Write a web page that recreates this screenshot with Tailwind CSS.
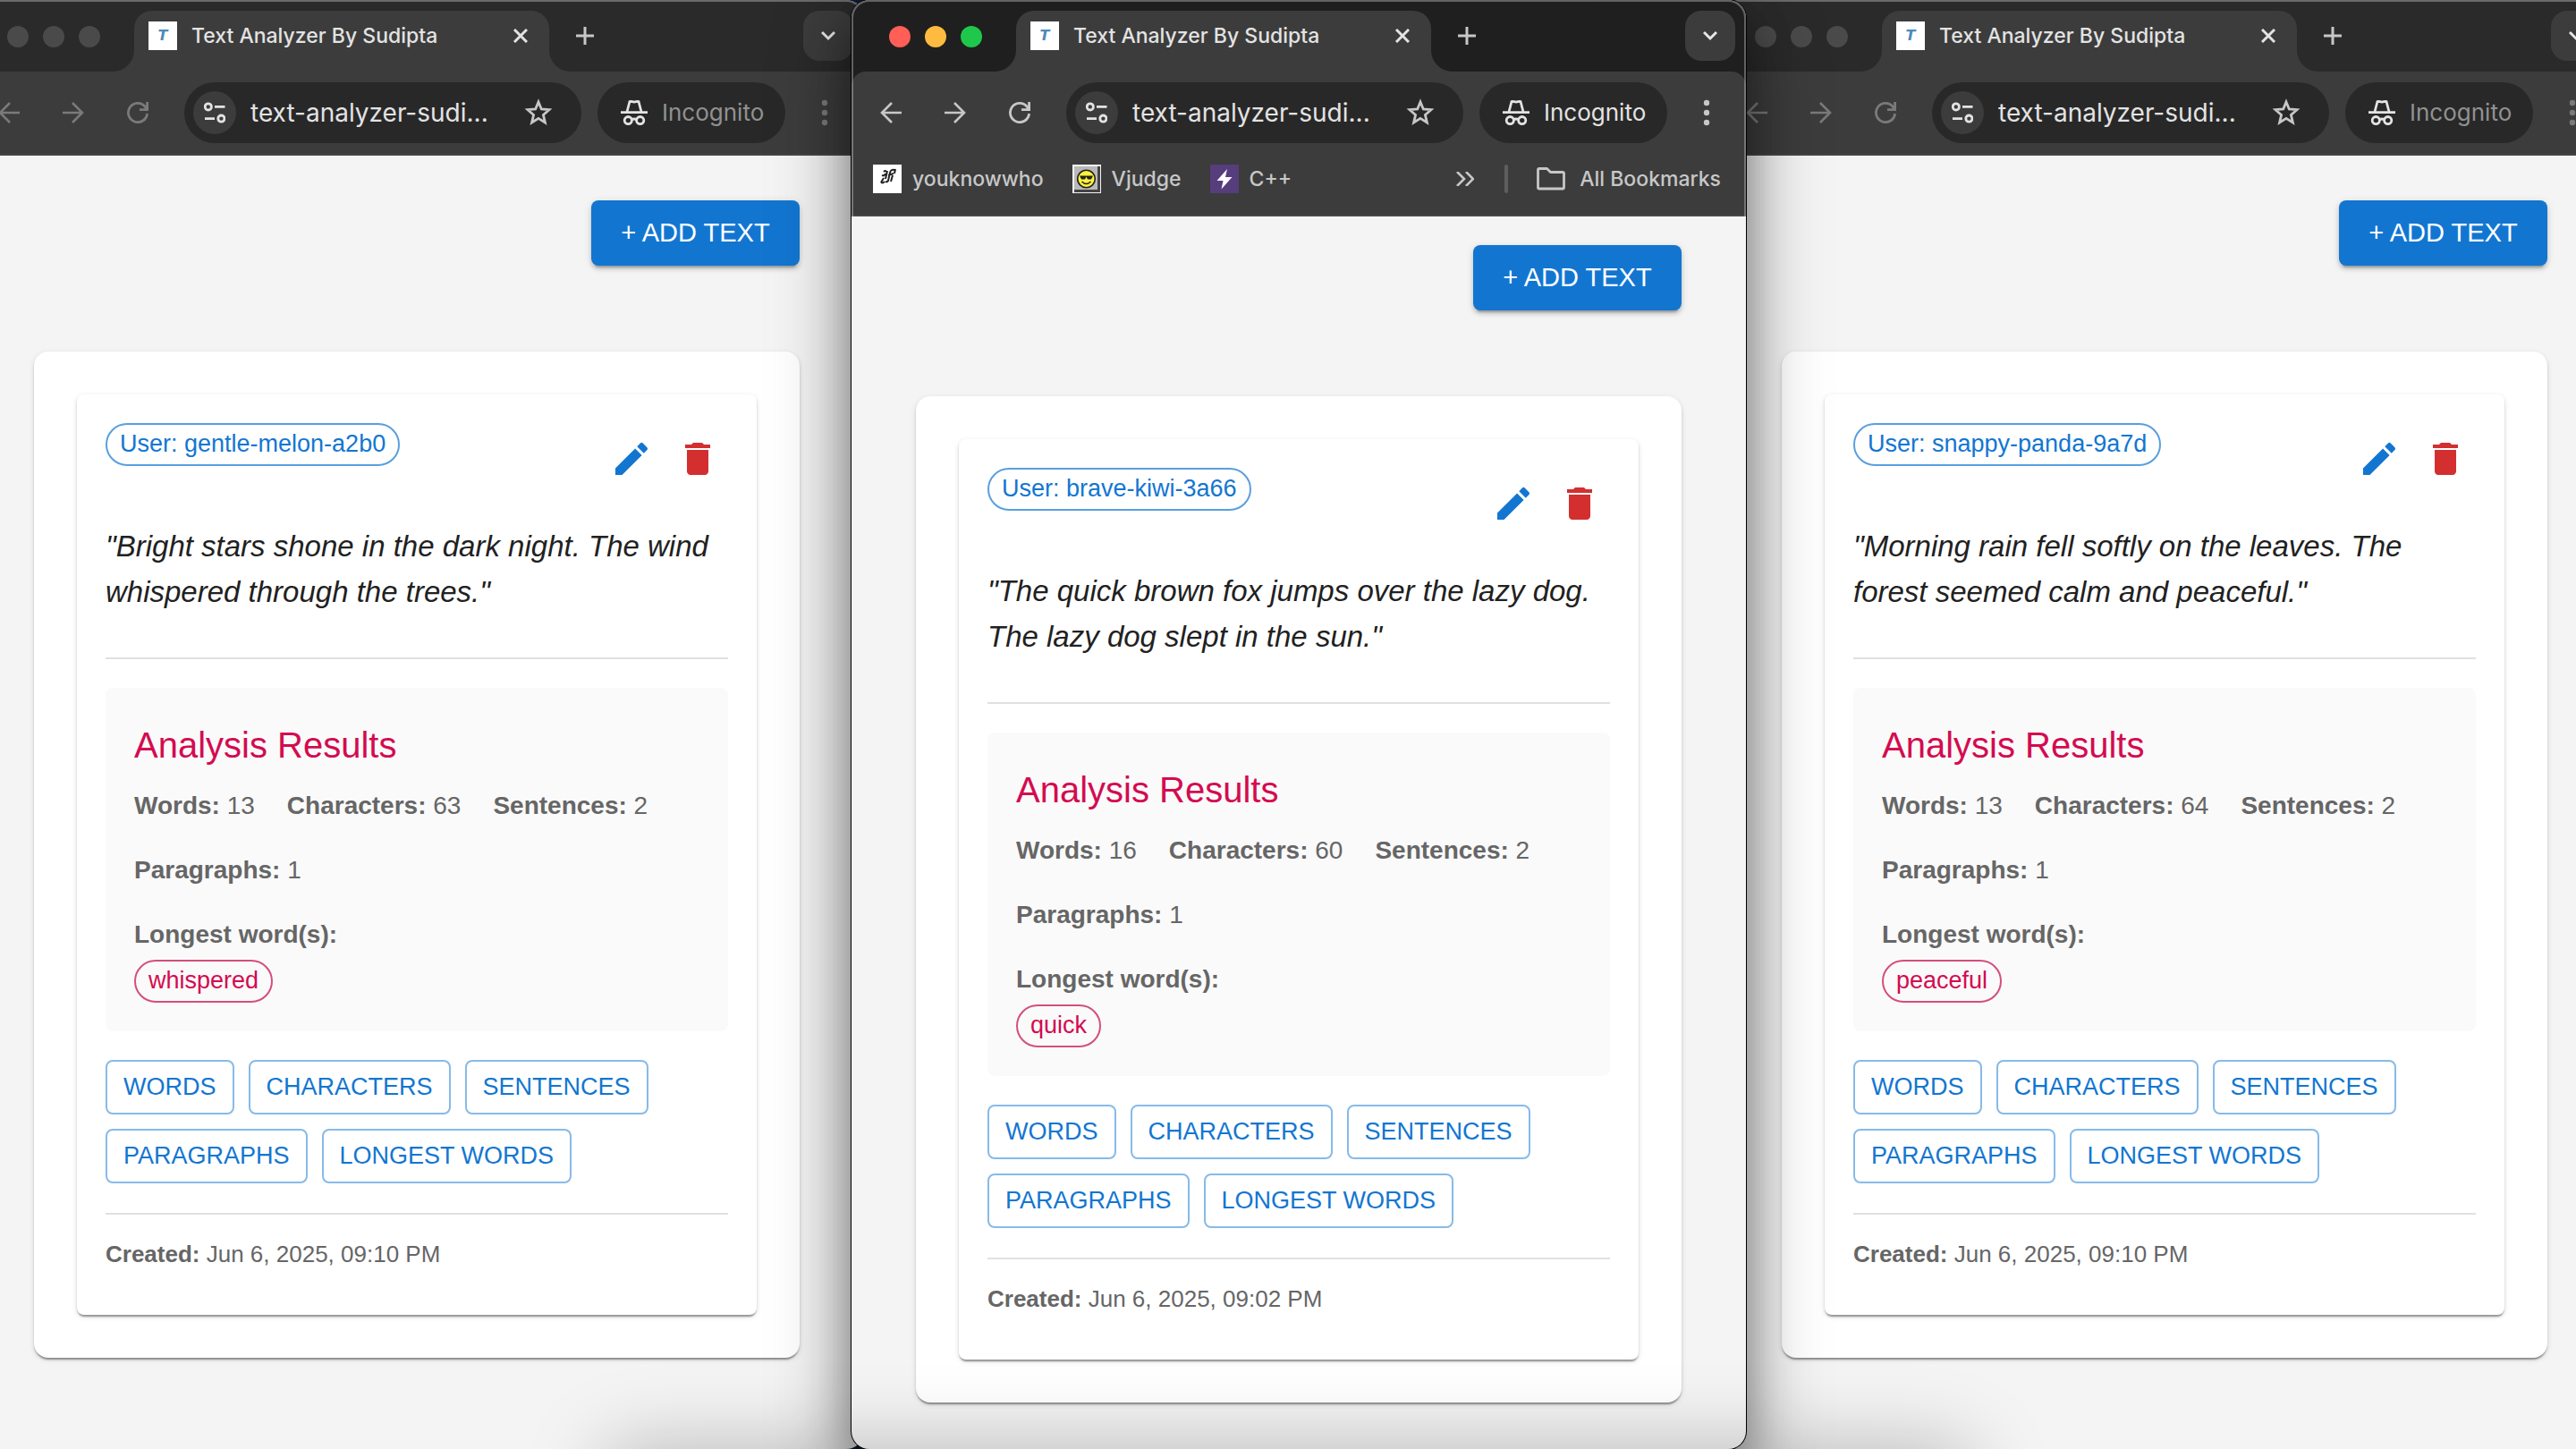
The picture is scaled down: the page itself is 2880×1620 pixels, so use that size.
<!DOCTYPE html>
<html lang="en">
<head>
<meta charset="utf-8">
<title>Text Analyzer By Sudipta</title>
<script src="https://cdn.jsdelivr.net/npm/@tailwindcss/browser@4"></script>
</head>
<body class="bg-[#0f1b33]">
<main id="desktop" class="relative grid min-h-screen w-full grid-cols-[952fr_1000fr_928fr] overflow-hidden font-['Liberation_Sans',Arial,sans-serif]"></main>

<script>
const windows = [
  { user: "gentle-melon-a2b0", text: "Bright stars shone in the dark night. The wind whispered through the trees.", words: 13, chars: 63, longest: "whispered", created: "Jun 6, 2025, 09:10 PM",
    frame: "relative -ml-[34px] -mr-[14px] flex flex-col overflow-hidden rounded-[20px] bg-[#f4f4f4]", page: "px-[72px] pt-[50px] pb-12" },
  { active: true, user: "brave-kiwi-3a66", text: "The quick brown fox jumps over the lazy dog. The lazy dog slept in the sun.", words: 16, chars: 60, longest: "quick", created: "Jun 6, 2025, 09:02 PM",
    frame: "relative z-10 flex flex-col overflow-hidden rounded-[20px] bg-[#f4f4f4] shadow-[0_0_0_1px_#000,0_30px_90px_rgba(0,0,0,0.4),0_20px_50px_rgba(0,0,0,0.3)]", page: "px-[72px] pt-8 pb-12" },
  { user: "snappy-panda-9a7d", text: "Morning rain fell softly on the leaves. The forest seemed calm and peaceful.", words: 13, chars: 64, longest: "peaceful", created: "Jun 6, 2025, 09:10 PM",
    frame: "relative -ml-8 -mr-10 flex flex-col overflow-hidden rounded-[20px] bg-[#f4f4f4]", page: "px-[72px] pt-[50px] pb-12" },
];

const lights = on => (on ? ["bg-[#ff5f57]", "bg-[#febb40]", "bg-[#1fc84b]"] : ["bg-[#4a4a4a]", "bg-[#4a4a4a]", "bg-[#4a4a4a]"])
  .map((c, i) => `<button aria-label="${["Close", "Minimize", "Zoom"][i]}" class="size-6 rounded-full ${c}"></button>`).join("");

const tabStrip = w => `
  <div class="flex h-20 items-start pr-3 pt-3 ${w.active ? "bg-[#1f1f1f]" : "bg-[#2a2a2a]"}">
    <div class="flex h-[58px] w-40 shrink-0 items-center gap-4 pl-[42px]">${lights(w.active)}</div>
    <svg class="mt-11 size-6 shrink-0 fill-[#3c3c3c]" viewBox="0 0 24 24"><path d="M24 0v24H0A24 24 0 0 0 24 0z"/></svg>
    <div class="flex h-[68px] w-[464px] shrink-0 items-start rounded-t-[20px] bg-[#3c3c3c] px-4 pt-3">
      <span class="flex size-8 items-center justify-center bg-white font-['DejaVu_Sans',sans-serif] text-base leading-4 font-bold text-[#4b8bbb] italic">T</span>
      <span class="ml-4 flex-1 text-[23px] leading-8 font-medium text-[#e3e3e3]">Text Analyzer By Sudipta</span>
      <button aria-label="Close tab" class="flex size-8 items-center justify-center"><svg class="size-4" viewBox="0 0 16 16" fill="none" stroke="#e3e3e3" stroke-width="3"><path d="M1 1l14 14M15 1L1 15"/></svg></button>
    </div>
    <svg class="mt-11 size-6 shrink-0 fill-[#3c3c3c]" viewBox="0 0 24 24"><path d="M0 0v24h24A24 24 0 0 1 0 0z"/></svg>
    <button aria-label="New tab" class="-ml-3 flex size-14 items-center justify-center"><svg class="size-5" viewBox="0 0 20 20" fill="none" stroke="#c7c7c7" stroke-width="3"><path d="M10 0v20M0 10h20"/></svg></button>
    <button aria-label="Search tabs" class="ml-auto flex size-14 items-center justify-center rounded-[18px] bg-[#3c3c3c]"><svg class="h-3 w-4" viewBox="0 0 16 12" fill="none" stroke="#e8e8e8" stroke-width="3"><path d="M1 2l7 7 7-7"/></svg></button>
  </div>`;

const toolbar = w => `
  <div class="${w.active ? "bg-[#1f1f1f]" : "bg-[#2a2a2a]"}">
  <div class="flex items-center rounded-t-2xl bg-[#3c3c3c] px-2 py-3 ${w.active ? "text-[#c7c7c7]" : "text-[#7a7a7a] border-b-2 border-[#474547]"}">
    <button aria-label="Back" class="flex h-[68px] w-[72px] items-center justify-center"><svg class="size-6" viewBox="0 0 24 24" fill="none" stroke="currentColor" stroke-width="2.6"><path d="M24 12H2M13 1L2 12l11 11"/></svg></button>
    <button aria-label="Forward" class="flex h-[68px] w-[72px] items-center justify-center"><svg class="size-6" viewBox="0 0 24 24" fill="none" stroke="currentColor" stroke-width="2.6"><path d="M0 12h22M11 1l11 11-11 11"/></svg></button>
    <button aria-label="Reload" class="flex h-[68px] w-[72px] items-center justify-center"><svg class="size-6" viewBox="0 0 24 24" fill="none" stroke="currentColor" stroke-width="2.8"><path d="M22.6 13A10.6 10.6 0 1 1 20 5l2 3M22.6 0v8.6H14"/></svg></button>
    <div class="ml-4 flex h-[68px] min-w-0 flex-1 items-center rounded-full bg-[#282828] pr-8 pl-[10px]">
      <button aria-label="View site information" class="flex size-12 shrink-0 items-center justify-center rounded-full bg-[#3c3c3c]"><svg class="size-6" viewBox="0 0 24 24" fill="none" stroke="#e3e3e3" stroke-width="2.8"><circle cx="4.8" cy="5.4" r="3.6"/><path d="M12 5.4h11.5M1 18.6h11"/><circle cx="19.4" cy="18.6" r="3.6"/></svg></button>
      <input aria-label="Address" value="text-analyzer-sudi..." class="ml-4 min-w-0 flex-1 bg-transparent text-[28px] leading-10 text-[#e3e3e3] outline-none">
      <button aria-label="Bookmark this tab"><svg class="size-8" viewBox="0 0 32 32" fill="none" stroke="#c7c7c7" stroke-width="2.8"><path d="M16 4l3.3 8 8.7.7-6.600 5.700 2 8.500L16 22.300l-7.400 4.600 2-8.500L4 12.700l8.700-.7z"/></svg></button>
    </div>
    <button class="ml-[18px] flex h-[68px] w-[210px] items-center gap-4 rounded-full bg-[#282828] pl-[26px] text-[26px] leading-10 ${w.active ? "text-[#e3e3e3]" : "text-[#919191]"}">
      <svg class="size-[30px] shrink-0" viewBox="0 0 30 30" fill="none" stroke="#e3e3e3" stroke-width="2.8"><path d="M0 14.600h30M7 14l3-11.500c1.700-.6 3 .6 5 .6s3.300-1.200 5-.6L23 14"/><circle cx="8.300" cy="23.600" r="4.100"/><circle cx="21.700" cy="23.600" r="4.100"/><path d="M12 22.800q3-1.600 6 0"/></svg>
      Incognito
    </button>
    <button aria-label="Menu" class="ml-2 flex h-[68px] w-[72px] items-center justify-center"><svg class="h-8 w-2" viewBox="0 0 8 32" fill="currentColor"><circle cx="4" cy="5" r="3.200"/><circle cx="4" cy="16" r="3.200"/><circle cx="4" cy="27" r="3.200"/></svg></button>
  </div></div>`;

const bookmarks = `
  <nav class="flex h-[70px] items-center border-b-2 border-[#474747] bg-[#3c3c3c] px-6 pb-3 text-[23px] leading-8 font-medium text-[#c7c7c7]">
    <a href="#" class="flex items-center gap-3"><svg class="size-8 bg-white" viewBox="0 0 32 32" fill="none" stroke="#222" stroke-width="2"><path d="M16 7l-2 9M15 8q-1-2-3 0M10 12q3 1 4-2M9 19q1 3 4 0M12 15l-3 5M24 6q-4-1-5 3l-2 9q-1 2-3 1M17 12l6-2M25 5l-1 5M22 12l-2 7"/></svg>youknowwho</a>
    <a href="#" class="ml-8 flex items-center gap-3"><svg class="size-8" viewBox="0 0 32 32"><path fill="#f2f2f2" d="M0 0h32v32H0z"/><path fill="#444" d="M2 2h29v29H2z"/><path fill="#b9b9b9" d="M2 2h26v26H2z"/><circle cx="15.500" cy="16" r="9.800" fill="#fdf23c" stroke="#222" stroke-width="1.600"/><path d="M8 12.500h15l-2 4h-4l-1.500-3-1.500 3h-4z" fill="#222"/><path d="M10.500 19q5 5 10 0" fill="none" stroke="#222" stroke-width="1.600"/></svg>Vjudge</a>
    <a href="#" class="ml-8 flex items-center gap-3"><svg class="size-8 bg-[#563d7c]" viewBox="0 0 32 32" fill="#fff"><path d="M19 5L7.500 18h7L12.500 27.500 24.500 14h-7.500z"/></svg>C++</a>
    <button aria-label="More bookmarks" class="ml-auto"><svg class="h-4 w-5" viewBox="0 0 20 16" fill="none" stroke="#c7c7c7" stroke-width="2.600"><path d="M1 0l8 8-8 8M11 0l8 8-8 8"/></svg></button>
    <span class="ml-[34px] h-8 w-1 rounded-full bg-[#5e5e5e]"></span>
    <a href="#" class="ml-8 mr-1 flex items-center gap-4"><svg class="h-[26px] w-8" viewBox="0 0 32 26" fill="none" stroke="#c7c7c7" stroke-width="2.800" stroke-linejoin="round"><path d="M1.500 3q0-1.500 1.500-1.500h8.500l4 4H29q1.500 0 1.500 1.500v15.500q0 1.500-1.500 1.500H3q-1.500 0-1.500-1.500z"/></svg>All Bookmarks</a>
  </nav>`;

const page = w => `
  <div class="flex flex-col ${w.page}">
    <button class="h-[73px] w-[233px] self-end rounded-lg bg-[#1276d1] text-[29px] leading-[49px] text-white shadow-[0_6px_2px_-4px_rgba(0,0,0,0.2),0_4px_4px_rgba(0,0,0,0.14),0_2px_10px_rgba(0,0,0,0.12)]">+ ADD TEXT</button>
    <section class="mt-24 rounded-2xl bg-white p-12 shadow-[0_4px_2px_-2px_rgba(0,0,0,0.25),0_2px_2px_rgba(0,0,0,0.18),0_2px_6px_rgba(0,0,0,0.12)]">
      <article class="rounded-lg bg-white p-8 pb-12 shadow-[0_4px_2px_-2px_rgba(0,0,0,0.25),0_2px_2px_rgba(0,0,0,0.18),0_2px_6px_rgba(0,0,0,0.12)]">
        <header class="flex items-start justify-between">
          <span class="h-12 rounded-full border-2 border-[#1276d1]/70 px-[14px] text-[27px] leading-[43px] text-[#1276d1]">User: ${w.user}</span>
          <div class="flex">
            <button aria-label="Edit" class="-mr-1.5 flex size-20 items-center justify-center"><svg class="size-12 fill-[#1276d1]" viewBox="0 0 24 24"><path d="M3 17.250V21h3.750L17.810 9.940l-3.750-3.750zM20.710 7.040c.39-.39.39-1.020 0-1.410l-2.340-2.340a.996.996 0 0 0-1.410 0l-1.830 1.830 3.750 3.750z"/></svg></button>
            <button aria-label="Delete" class="-mr-1.5 flex size-20 items-center justify-center"><svg class="size-12 fill-[#d32f2f]" viewBox="0 0 24 24"><path d="M6 19c0 1.100.9 2 2 2h8c1.100 0 2-.9 2-2V7H6zM19 4h-3.500l-1-1h-5l-1 1H5v2h14z"/></svg></button>
          </div>
        </header>
        <p class="mt-8 text-[33px] leading-[51px] text-[#212121] italic">"${w.text}"</p>
        <hr class="mt-12 border-t-2 border-[#e0e0e0]">
        <section class="mt-8 rounded-lg bg-[#fafafa] p-8 text-[28px] leading-10 text-[#666]">
          <h2 class="text-[40px] leading-[64px] text-[#d40b50]">Analysis Results</h2>
          <div class="mt-4 flex flex-wrap gap-x-9 gap-y-8">
            <span><b>Words:</b> ${w.words}</span><span><b>Characters:</b> ${w.chars}</span><span><b>Sentences:</b> 2</span><span><b>Paragraphs:</b> 1</span>
          </div>
          <p class="mt-8 font-bold">Longest word(s):</p>
          <div class="mt-2 flex"><span class="h-12 rounded-full border-2 border-[#c9245c]/80 px-[14px] text-[27px] leading-[43px] text-[#d40b50]">${w.longest}</span></div>
        </section>
        <div class="mt-8 flex flex-wrap gap-4">
          ${["WORDS", "CHARACTERS", "SENTENCES", "PARAGRAPHS", "LONGEST WORDS"].map(t => `<button class="h-[61px] rounded-lg border-2 border-[#1276d1]/50 px-[18px] text-[27px] leading-[45px] text-[#1276d1]">${t}</button>`).join("")}
        </div>
        <hr class="mt-[33px] border-t-2 border-[#e0e0e0]">
        <p class="mt-6 text-[26px] leading-10 text-[#666]"><b>Created:</b> ${w.created}</p>
      </article>
    </section>
  </div>`;

document.getElementById("desktop").innerHTML = windows.map(w => `
  <section class="${w.frame}">
    <header class="relative font-['Inter',sans-serif]">
      ${tabStrip(w)}${toolbar(w)}${w.active ? bookmarks : ""}
      <div class="pointer-events-none absolute inset-0 rounded-t-[20px] border-x-2 border-t-2 border-white/30"></div>
    </header>
    ${page(w)}
  </section>`).join("") +
  `<div class="pointer-events-none absolute top-full right-[23.6%] left-[23.6%] z-20 h-40 shadow-[0_0_90px_rgba(0,0,0,0.26)]"></div>`;
</script>
</body>
</html>
